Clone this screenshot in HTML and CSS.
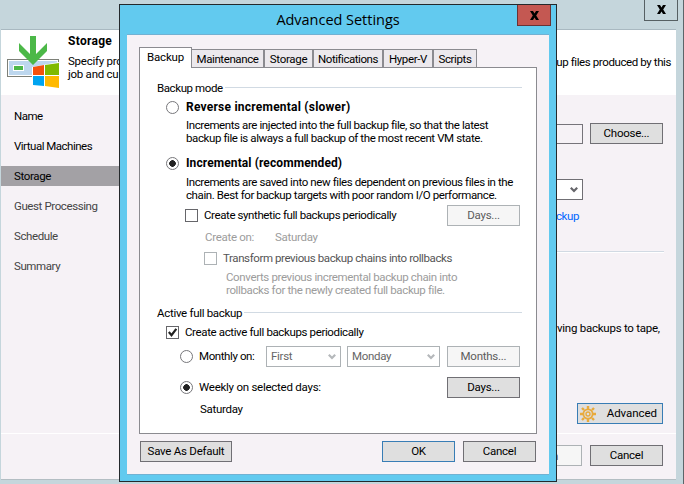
FILE: index.html
```html
<!DOCTYPE html>
<html lang="en">
<head>
<meta charset="utf-8">
<title>Advanced Settings</title>
<link rel="stylesheet" href="styles.css">
</head>
<body>
<div class="wizard">
  <div class="wizard-bar"><button class="wizard-close"><svg width="9" height="9" viewBox="0 0 9 9"><path d="M0 0h3l1.500 2.500L6 0h3L6.200 4.500 9 9H6L4.500 6.500 3 9H0l2.800-4.500z"/></svg></button></div>
  <div class="wizard-client">
    <header class="wizard-head">
      <svg class="logo" width="53" height="53" viewBox="0 0 53 53">
        <rect x=".5" y="23.500" width="51" height="17" fill="#bdd7ee" stroke="#7d8078"/>
        <rect x="1.500" y="24.500" width="49" height="15" fill="none" stroke="#fff"/>
        <rect x="6.500" y="29.500" width="10" height="5" fill="#4cb848" stroke="#fff"/>
        <path d="M23 0h6v18l11-11v8L26 29 12 15V7l11 11z" fill="#4cb848"/>
        <path d="M25 31 52 26v27l-27-3z" fill="#fff"/>
        <path d="M26 31l11-2v10H26z" fill="#f4510b"/><path d="M38 29l14-2v12H38z" fill="#7fba00"/>
        <path d="M26 40h11v10l-11-1z" fill="#00a4f0"/><path d="M38 40h14v12l-14-2z" fill="#ffb900"/>
      </svg>
      <div class="head-text"><h1>Storage</h1><p>Specify pro<br>job and cu</p></div>
      <p class="head-rest">up files produced by this</p>
    </header>
    <div class="wizard-body">
      <nav>
        <a>Name</a><a>Virtual Machines</a><a class="current">Storage</a>
        <a class="next">Guest Processing</a><a class="next">Schedule</a><a class="next">Summary</a>
      </nav>
      <main>
        <div class="line repo"><span class="field"></span><button class="btn">Choose...</button></div>
        <div class="line policy"><span class="select"><svg class="chev" width="8" height="6" viewBox="0 0 8 6"><path d="M.8.800 4 4 7.200.800"/></svg></span></div>
        <a class="link">ckup</a>
        <hr>
        <p class="tape">ving backups to tape,</p>
        <button class="btn advanced"><svg width="16" height="16" viewBox="0 0 16 16"><g fill="none" stroke="#e8aa3c"><circle cx="8" cy="8" r="4.600" stroke-width="1.800"/><circle cx="8" cy="8" r="2" stroke-width="1.400"/><path stroke-width="2.400" d="M8 0v3M8 13v3M0 8h3M13 8h3M2 2l2 2M12 12l2 2M14 2l-2 2M4 12l-2 2"/></g></svg><span>Advanced</span></button>
      </main>
    </div>
    <footer class="wizard-foot"><button class="btn off finish">h</button><button class="btn">Cancel</button></footer>
  </div>
</div>

<div class="dialog">
  <div class="dialog-bar"><h2>Advanced Settings</h2><button class="close"><svg width="9" height="9" viewBox="0 0 9 9"><path d="M0 0h3l1.500 2.500L6 0h3L6.200 4.500 9 9H6L4.500 6.500 3 9H0l2.800-4.500z"/></svg></button></div>
  <div class="dialog-client">
    <div class="tabs"><span class="tab active">Backup</span><span class="tab maint">Maintenance</span><span class="tab stor">Storage</span><span class="tab notif">Notifications</span><span class="tab hyper">Hyper-V</span><span class="tab scr">Scripts</span></div>
    <section class="panel">
      <div class="legend first"><span>Backup mode</span></div>
      <label class="choice r1"><i class="radio"></i><b>Reverse incremental (slower)</b></label>
      <p class="desc d1">Increments are injected into the full backup file, so that the latest<br>backup file is always a full backup of the most recent VM state.</p>
      <label class="choice r2"><i class="radio on"></i><b>Incremental (recommended)</b></label>
      <p class="desc d2">Increments are saved into new files dependent on previous files in the<br>chain. Best for backup targets with poor random I/O performance.</p>
      <div class="row synth"><i class="check"></i><span>Create synthetic full backups periodically</span><button class="btn off">Days...</button></div>
      <div class="row create"><span class="create-label">Create on:</span><span>Saturday</span></div>
      <div class="row transform"><i class="check"></i><span>Transform previous backup chains into rollbacks</span></div>
      <p class="converts">Converts previous incremental backup chain into<br>rollbacks for the newly created full backup file.</p>
      <div class="legend second"><span>Active full backup</span></div>
      <div class="row active-full"><i class="check"><svg width="9" height="9" viewBox="0 0 9 9"><path d="M.8 4 3.500 7.200 8.300.800"/></svg></i><span>Create active full backups periodically</span></div>
      <div class="row monthly"><i class="radio"></i><span class="monthly-label">Monthly on:</span>
        <span class="select off week">First<svg class="chev" width="8" height="6" viewBox="0 0 8 6"><path d="M.8.800 4 4 7.200.800"/></svg></span>
        <span class="select off day">Monday<svg class="chev" width="8" height="6" viewBox="0 0 8 6"><path d="M.8.800 4 4 7.200.800"/></svg></span>
        <button class="btn off">Months...</button></div>
      <div class="row weekly"><i class="radio on"></i><span class="weekly-label">Weekly on selected days:</span><button class="btn">Days...</button></div>
      <p class="weekly-days">Saturday</p>
    </section>
    <div class="actions"><button class="btn save">Save As Default</button><button class="btn ok">OK</button><button class="btn">Cancel</button></div>
  </div>
</div>
</body>
</html>
```
FILE: styles.css
```css
* { box-sizing: border-box; }
body { margin: 0; width: 684px; height: 484px; overflow: hidden; position: relative; background: #c5d6dc; font: 11.5px/13px Roboto, "Liberation Sans", sans-serif; letter-spacing: -.4px; color: #000; white-space: nowrap; }
h1, h2, p { margin: 0; font-weight: normal; }
button { font: inherit; letter-spacing: -.25px; color: inherit; padding: 0; margin: 0; }
svg { display: block; flex: none; }

.wizard { height: 484px; padding: 0 7px 0 1px; border-right: 1px solid #5c6569; }
.wizard-bar { height: 29px; display: flex; justify-content: flex-end; }
.wizard-close { width: 34px; height: 21px; margin-right: -2px; border: 1px solid #566063; border-top: 0; background: none; display: flex; justify-content: center; padding-top: 5px; }
.wizard-client { height: 451px; border-top: 1px solid #a9b9c1; border-bottom: 1px solid #b3bec3; background: #f6f2f6; display: flex; flex-direction: column; }
.wizard-head { height: 65px; background: #fff; display: flex; padding: 6px 0 0 6px; }
.head-text { margin-left: 8px; width: 111px; }
.head-text h1 { font-size: 12px; font-weight: bold; margin-top: -2px; margin-bottom: 7px; line-height: 14px; letter-spacing: .3px; }
.head-text p { letter-spacing: -.25px; }
.head-rest { margin: 20px 5px 0 auto; letter-spacing: -.4px; }
.wizard-body { flex: 1; display: flex; justify-content: space-between; border-bottom: 1px solid #fff; }
nav { width: 119px; padding-top: 11px; display: flex; flex-direction: column; gap: 10px; }
nav a { height: 20px; line-height: 21px; padding-left: 13px; letter-spacing: -.5px; }
nav .current { background: #a3a1a5; letter-spacing: -.35px; }
nav .next { color: #444; letter-spacing: -.4px; }
main { width: 120px; display: flex; flex-direction: column; padding-right: 13px; }
.line { display: flex; }
.repo { margin-top: 28px; align-items: center; gap: 7px; }
.field { width: 27px; height: 20px; border: 1px solid #76747a; background: #f6f2f6; border-left: 0; }
.policy { margin-top: 35px; }
.policy .select { width: 27px; border-left: 0; }
.link { color: #0066ff; margin-top: 10px; }
main hr { width: 108px; margin: 28px 0 0; border: 0; border-top: 1px solid #d1dae3; border-bottom: 1px solid #fff; }
.tape { margin: 69px 0 0 1px; letter-spacing: -.25px; }
.advanced.btn { width: 86px; margin: 68px 0 0 auto; border-color: #387db5; padding: 0 5px 0 2px; justify-content: space-between; letter-spacing: -.05px; }
.wizard-foot { height: 45px; padding: 11px 13px 0 0; display: flex; justify-content: flex-end; gap: 8px; }
.finish.btn { width: 73px; padding: 2px 0 0 42px; justify-content: flex-start; }

.btn { width: 73px; height: 21px; flex: none; border: 1px solid #706f74; background: #dfdfdf; display: flex; align-items: center; justify-content: center; }
.btn.off { background: #f6f6f6; border-color: #adb2b5; color: #5c5c5c; }
.select { height: 21px; flex: none; border: 1px solid #706f74; background: #fff; display: flex; align-items: center; justify-content: space-between; padding: 0 4px; letter-spacing: -.3px; }
.select.off { border-color: #adb2b5; color: #666; }
.chev { margin-left: auto; }
.chev path { fill: none; stroke: #65656a; stroke-width: 2.200; }
.off .chev path { stroke: #b5b8bb; }

.dialog { position: absolute; left: 119px; top: 4px; width: 438px; height: 478px; border: 1px solid #24292c; background: #62caef; padding: 0 7px; }
.dialog-bar { height: 29px; position: relative; display: flex; justify-content: center; }
.dialog-bar h2 { font: 14.5px/30px "Open Sans", "Noto Sans", sans-serif; letter-spacing: -.03px; }
.close { position: absolute; right: -2px; top: 0; width: 34px; height: 21px; border: 1px solid #6b3234; border-top: 0; background: #c45852; display: flex; justify-content: center; padding-top: 6px; }
.dialog-client { height: 441px; border-top: 1px solid #72b1d2; border-bottom: 1px solid #72b1d2; background: #f6f2f6; padding: 12px 12px 0; }
.tabs { display: flex; align-items: flex-end; height: 21px; position: relative; margin-bottom: -1px; }
.tab { height: 19px; border: 1px solid #8b8b90; background: #ece9ed; display: flex; align-items: center; justify-content: center; }
.tab.active { height: 21px; width: 53px; background: #fff; border-bottom: 0; padding-bottom: 2px; letter-spacing: -.2px; }
.maint { width: 72px; border-left: 0; letter-spacing: -.4px; padding-top: 1px; }
.stor { width: 49px; letter-spacing: -.3px; padding-top: 1px; }
.notif { width: 70px; letter-spacing: -.45px; padding-top: 1px; }
.hyper { width: 50px; letter-spacing: -.35px; padding-top: 1px; }
.scr { width: 44px; letter-spacing: -.4px; padding-top: 1px; }
.panel { height: 367px; width: 398px; border: 1px solid #8b8b90; background: #fff; padding: 0 14px 0 17px; display: flex; flex-direction: column; }
.legend { display: flex; align-items: center; height: 16px; flex: none; }
.legend::after { content: ""; flex: 1; height: 1px; background: #d1dae3; margin: -1px 0 0 2px; }
.legend.first { margin-top: 12px; }
.choice { display: flex; align-items: center; height: 16px; margin-left: 9px; }
.choice b { font-size: 12px; margin-left: 7.5px; letter-spacing: .1px; }
.r1 b { letter-spacing: .23px; }
.r1 { margin-top: 3px; } .r2 { margin-top: 10px; }
.radio { width: 13px; height: 13px; border: 1px solid #77777b; border-radius: 50%; flex: none; background: #fff; margin-left: -.5px; }
.radio.on { background: radial-gradient(circle, #222 0 3px, #fff 3.600px); }
.desc { margin: 4px 0 0 29px; } .d2 { margin-top: 5px; }
.row { display: flex; align-items: center; flex: none; }
.row .btn { margin-left: auto; margin-right: 2px; }
.check { width: 13px; height: 13px; border: 1px solid #66666a; flex: none; background: #fff; display: flex; align-items: center; justify-content: center; }
.check path { fill: none; stroke: #222; stroke-width: 2.200; }
.check + span { margin-left: 6px; }
.synth { height: 21px; margin: 3px 0 0 28px; }
.create { height: 14px; margin: 4px 0 0 48px; color: #9c9c9c; letter-spacing: -.3px; }
.create-label { width: 70px; }
.transform { height: 16px; margin: 6px 0 0 47px; color: #555; }
.transform .check { border-color: #adb2b5; }
.converts { margin: 5px 0 0 69px; color: #9c9c9c; letter-spacing: -.37px; }
.legend.second { margin-top: 8px; }
.second span { letter-spacing: -.3px; }
.active-full { height: 16px; margin: 3px 0 0 9px; letter-spacing: -.37px; }
.monthly { height: 21px; margin: 6px 0 0 23px; }
.radio + span { margin-left: 6.5px; }
.monthly-label { width: 67px; }
.week { width: 75px; margin-right: 6px; } .day { width: 93px; }
.weekly { height: 21px; margin: 10px 0 0 23px; }
.weekly-label { letter-spacing: -.25px; }
.weekly-days { margin: 5px 0 0 43px; letter-spacing: -.3px; }
.actions { display: flex; margin: 7px 1px 0 1px; gap: 8px; }
.save.btn { width: 92px; margin-right: auto; }
.ok.btn { border-color: #387db5; }
```
